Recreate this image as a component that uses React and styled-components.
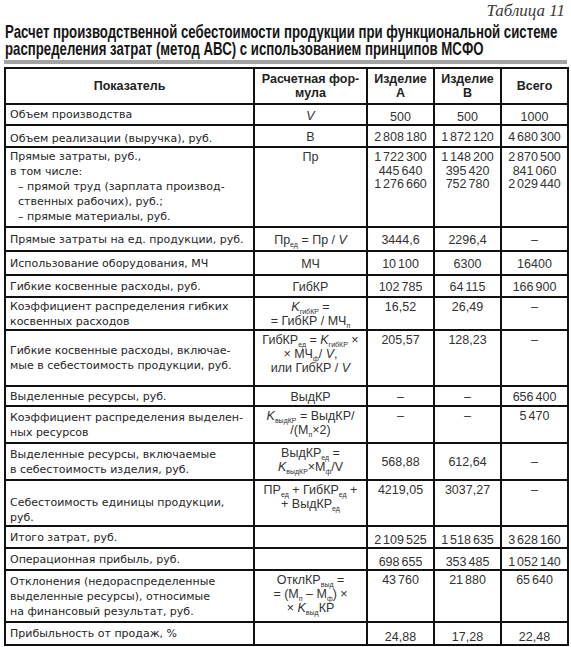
import React from 'react';
import styled, { createGlobalStyle } from 'styled-components';

const GlobalStyle = createGlobalStyle`
  body {
    margin: 0;
    background: #fff;
  }
`;

const Page = styled.div`
  width: 571px;
  padding: 2px 4px 0 4px;
  box-sizing: border-box;
  color: #1a1a1a;
  overflow: hidden;
`;

const Caption = styled.div`
  text-align: right;
  font-family: "Liberation Serif", serif;
  font-style: italic;
  font-size: 17px;
  line-height: 18px;
  color: #3a3a3a;
  padding-right: 2px;
`;

// condensed bold heading, squeezed horizontally like the print original
const Title = styled.h1`
  margin: 3px 0 0 1px;
  font-family: "Liberation Sans", Arial, sans-serif;
  font-weight: bold;
  font-size: 18.5px;
  line-height: 17px;
  white-space: nowrap;
  color: #161616;
  transform: scaleX(0.715);
  transform-origin: left top;
`;

const GrayBar = styled.div`
  height: 4px;
  margin-top: 3px;
  background: #a3a3a3;
`;

const Table = styled.table`
  margin-top: 3px;
  width: 563px;
  border-collapse: collapse;
  table-layout: fixed;
  border: 2px solid #111;
`;

const Th = styled.th`
  border: 2px solid #111;
  font-family: "Liberation Sans", Arial, sans-serif;
  font-weight: bold;
  font-size: 12.5px;
  line-height: 14px;
  color: #222;
  text-align: center;
  vertical-align: middle;
  padding: 0 2px;
`;

const Row = styled.tr`
  height: ${p => p.h}px;
`;

const Label = styled.td`
  border: 2px solid #111;
  font-family: "DejaVu Sans", Tahoma, sans-serif;
  font-size: 11px;
  line-height: 15px;
  color: #262626;
  padding: ${p => (p.v === 'middle' ? '0' : '1px')} 1px 0 4px;
  vertical-align: ${p => p.v || 'top'};
  white-space: nowrap;
`;

const Formula = styled.td`
  border: 2px solid #111;
  font-family: "Liberation Sans", Arial, sans-serif;
  font-size: 12.5px;
  line-height: 14px;
  color: #333;
  text-align: center;
  padding: 2px 2px 0;
  vertical-align: ${p => p.v || 'top'};
  white-space: nowrap;

  & sub {
    font-size: 7px;
    vertical-align: -3px;
    line-height: 0;
  }
`;

const Value = styled.td`
  border: 2px solid #111;
  font-family: "Liberation Sans", Arial, sans-serif;
  font-size: 12.5px;
  line-height: 13.5px;
  color: #333;
  text-align: center;
  word-spacing: -1.5px;
  white-space: nowrap;
  padding: ${p => (p.v === 'bottom' ? '0 2px 0' : '3px 2px 0')};
  vertical-align: ${p => p.v || 'top'};
`;

const I = styled.i`
  font-style: italic;
`;

const Ind = styled.span`
  display: block;
  padding-left: 8px;
`;

const rows = [
  { h: 21, label: 'Объем производства', lv: 'middle', f: <I>V</I>, fv: 'middle', vals: ['500', '500', '1000'], vv: 'bottom' },
  { h: 22, label: 'Объем реализации (выручка), руб.', lv: 'bottom', f: 'В', fv: 'middle', vals: ['2 808 180', '1 872 120', '4 680 300'], vv: 'middle' },
  {
    h: 80,
    label: (
      <>
        Прямые затраты, руб.,<br />
        в том числе:
        <Ind>– прямой труд (зарплата производ-<br />ственных рабочих), руб.;</Ind>
        <Ind>– прямые материалы, руб.</Ind>
      </>
    ),
    f: 'Пр',
    vals: [
      <>1 722 300<br />445 640<br />1 276 660</>,
      <>1 148 200<br />395 420<br />752 780</>,
      <>2 870 500<br />841 060<br />2 029 440</>,
    ],
  },
  {
    h: 24,
    label: 'Прямые затраты на ед. продукции, руб.',
    lv: 'middle',
    f: <>Пр<sub>ед</sub> = Пр / <I>V</I></>,
    fv: 'middle',
    vals: ['3444,6', '2296,4', '–'],
    vv: 'middle',
  },
  { h: 24, label: 'Использование оборудования, МЧ', lv: 'middle', f: 'МЧ', fv: 'middle', vals: ['10 100', '6300', '16400'], vv: 'middle' },
  { h: 22, label: 'Гибкие косвенные расходы, руб.', lv: 'middle', f: 'ГибКР', fv: 'middle', vals: ['102 785', '64 115', '166 900'], vv: 'middle' },
  {
    h: 32,
    label: <>Коэффициент распределения гибких<br />косвенных расходов</>,
    f: <><I>K</I><sub>гибКР</sub> =<br />= ГибКР / МЧ<sub>п</sub></>,
    vals: ['16,52', '26,49', '–'],
  },
  {
    h: 56,
    label: <>Гибкие косвенные расходы, включае-<br />мые в себестоимость продукции, руб.</>,
    lv: 'middle',
    f: <>ГибКР<sub>ед</sub> = <I>K</I><sub>гибКР</sub> ×<br />× МЧ<sub>ф</sub>/ <I>V</I>,<br />или ГибКР / <I>V</I></>,
    vals: ['205,57', '128,23', '–'],
  },
  { h: 20, label: 'Выделенные ресурсы, руб.', lv: 'middle', f: 'ВыдКР', fv: 'middle', vals: ['–', '–', '656 400'], vv: 'middle' },
  {
    h: 37,
    label: <>Коэффициент распределения выделен-<br />ных ресурсов</>,
    lv: 'middle',
    f: <><I>K</I><sub>выдКР</sub> = ВыдКР/<br />/(М<sub>п</sub>×2)</>,
    vals: ['–', '–', '5 470'],
  },
  {
    h: 37,
    label: <>Выделенные ресурсы, включаемые<br />в себестоимость изделия, руб.</>,
    lv: 'middle',
    f: <>ВыдКР<sub>ед</sub> =<br /><I>K</I><sub>выдКР</sub>×М<sub>ф</sub>/V</>,
    vals: ['568,88', '612,64', '–'],
    vv: 'middle',
  },
  {
    h: 46,
    label: <>Себестоимость единицы продукции,<br />руб.</>,
    lv: 'bottom',
    f: <>ПР<sub>ед</sub> + ГибКР<sub>ед</sub> +<br />+ ВыдКР<sub>ед</sub></>,
    vals: ['4219,05', '3037,27', '–'],
  },
  { h: 22, label: 'Итого затрат, руб.', lv: 'middle', f: '', vals: ['2 109 525', '1 518 635', '3 628 160'], vv: 'bottom' },
  { h: 22, label: 'Операционная прибыль, руб.', lv: 'middle', f: '', vals: ['698 655', '353 485', '1 052 140'], vv: 'bottom' },
  {
    h: 52,
    label: <>Отклонения (недораспределенные<br />выделенные ресурсы), относимые<br />на финансовый результат, руб.</>,
    lv: 'middle',
    f: <>ОтклКР<sub>выд</sub> =<br />= (М<sub>п</sub> – М<sub>ф</sub>) ×<br />× <I>K</I><sub>выд</sub>КР</>,
    vals: ['43 760', '21 880', '65 640'],
  },
  { h: 23, label: 'Прибыльность от продаж, %', lv: 'middle', f: '', vals: ['24,88', '17,28', '22,48'], vv: 'bottom' },
];

export default function App() {
  return (
    <Page>
      <GlobalStyle />
      <Caption>Таблица 11</Caption>
      <Title>
        Расчет производственной себестоимости продукции при функциональной системе<br />
        распределения затрат (метод АВС) с использованием принципов МСФО
      </Title>
      <GrayBar />
      <Table>
        <colgroup>
          <col style={{ width: 249 }} />
          <col style={{ width: 113 }} />
          <col style={{ width: 67 }} />
          <col style={{ width: 67 }} />
          <col style={{ width: 67 }} />
        </colgroup>
        <thead>
          <Row h={36}>
            <Th>Показатель</Th>
            <Th>Расчетная фор-<br />мула</Th>
            <Th>Изделие<br />А</Th>
            <Th>Изделие<br />В</Th>
            <Th>Всего</Th>
          </Row>
        </thead>
        <tbody>
          {rows.map((r, i) => (
            <Row key={i} h={r.h}>
              <Label v={r.lv}>{r.label}</Label>
              <Formula v={r.fv}>{r.f}</Formula>
              {r.vals.map((v, j) => (
                <Value key={j} v={r.vv}>{v}</Value>
              ))}
            </Row>
          ))}
        </tbody>
      </Table>
    </Page>
  );
}
